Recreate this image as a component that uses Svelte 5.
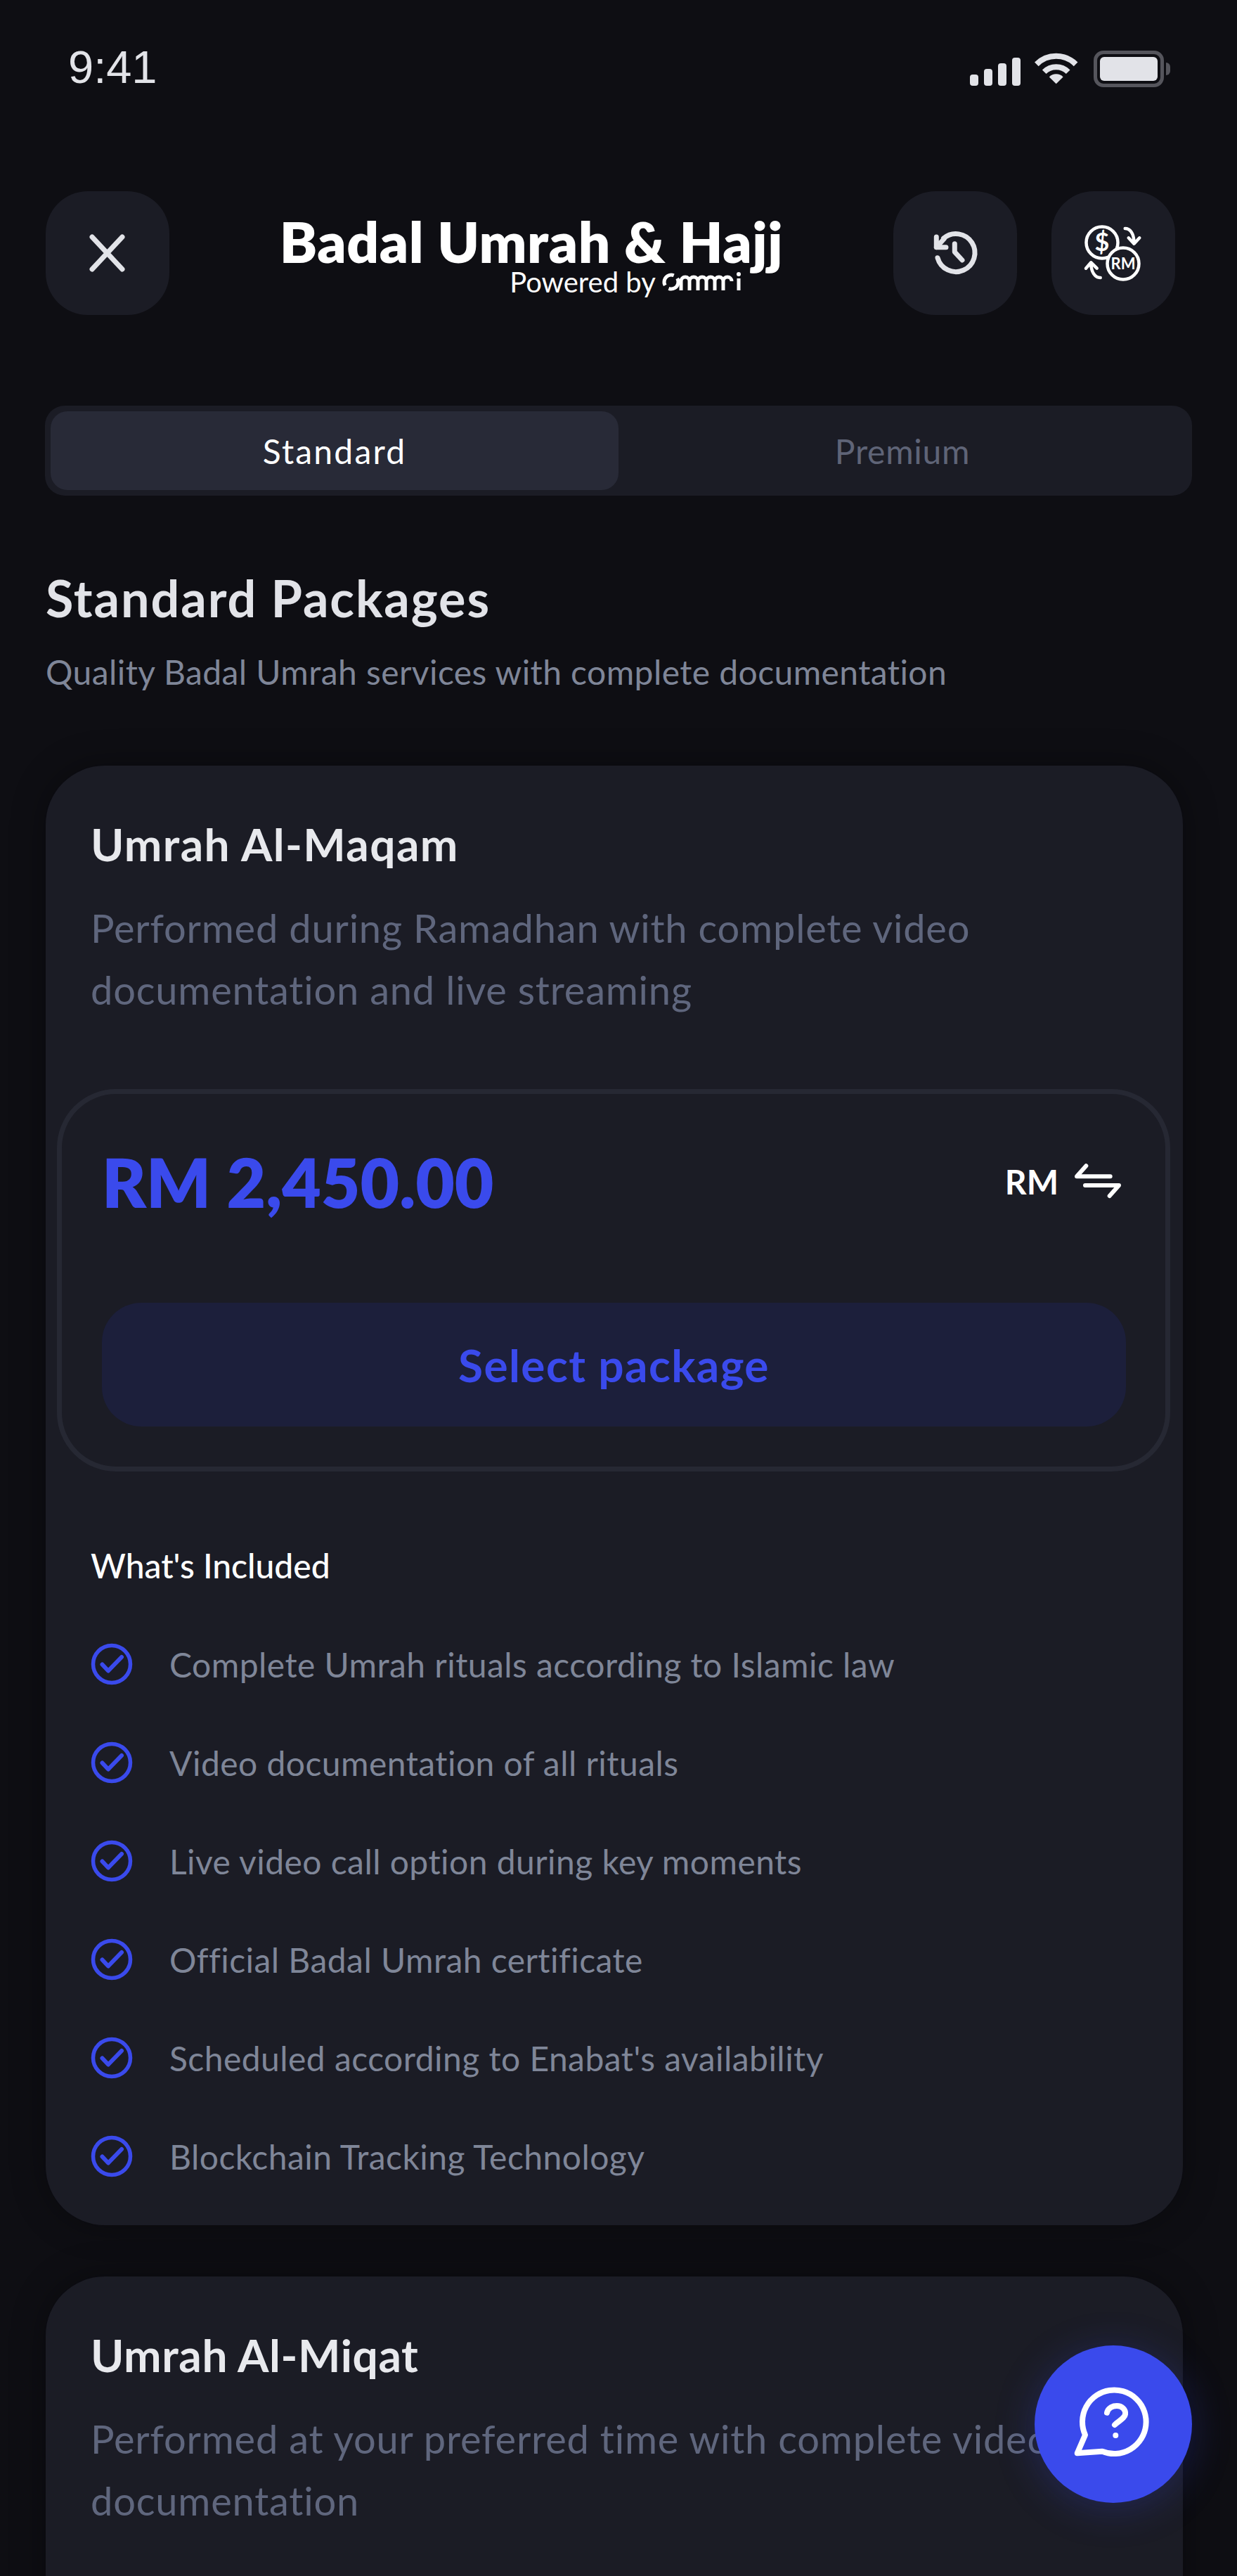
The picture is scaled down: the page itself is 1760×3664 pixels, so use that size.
<script>
  const features = [
    'Complete Umrah rituals according to Islamic law',
    'Video documentation of all rituals',
    'Live video call option during key moments',
    'Official Badal Umrah certificate',
    "Scheduled according to Enabat's availability",
    'Blockchain Tracking Technology'
  ];
</script>

<div class="page">
  <div class="status">
    <span class="time">9:41</span>
    <div class="status-icons">
      <svg class="signal" width="72" height="40" viewBox="0 0 72 40" fill="#e2e3e8">
        <rect x="0" y="24" width="12" height="16" rx="4" />
        <rect x="20" y="16" width="12" height="24" rx="4" />
        <rect x="40" y="8" width="12" height="32" rx="4" />
        <rect x="60" y="0" width="12" height="40" rx="4" />
      </svg>
      <svg class="wifi" width="62" height="46" viewBox="0 0 62 46" fill="none" stroke="#e2e3e8" stroke-width="8">
        <path d="M2.8 16.4A39.5 39.5 0 0 1 58.6 16.4" />
        <path d="M13.7 27.3A24 24 0 0 1 47.7 27.3" />
        <path d="M30.7 44.3L20.8 34.4A14 14 0 0 1 40.6 34.4Z" fill="#e2e3e8" stroke="none" />
      </svg>
      <div class="battery">
        <div class="battery-fill"></div>
        <div class="battery-nub"></div>
      </div>
    </div>
  </div>

  <header class="header">
    <button class="icon-btn" aria-label="Close">
      <svg width="56" height="56" viewBox="0 0 56 56" fill="none" stroke="#e2e3e8" stroke-width="7" stroke-linecap="round">
        <path d="M6 5L49 51M49 5L6 51" />
      </svg>
    </button>
    <div class="title-wrap">
      <h1>Badal Umrah &amp; Hajj</h1>
      <div class="powered">
        <span>Powered by</span>
        <svg width="116" height="30" viewBox="0 0 116 30" fill="none" stroke="#fff" stroke-width="5" aria-label="ommri">
          <circle cx="14" cy="15" r="10" stroke-dasharray="24.4 7" transform="rotate(-30 14 15)" />
          <path d="M28 27V14a6 6 0 0 1 12 0V27M40 14a6 6 0 0 1 12 0V27M52 27V14a6 6 0 0 1 12 0V27M64 14a6 6 0 0 1 12 0V27M76 27V14a6 6 0 0 1 12 0V27M88 14a6 6 0 0 1 12 0M110 10V27" />
          <circle cx="110" cy="4" r="3" fill="#fff" stroke="none" />
        </svg>
      </div>
    </div>
    <div class="header-actions">
      <button class="icon-btn" aria-label="History">
        <svg width="80" height="80" viewBox="0 0 80 80" fill="none" stroke="#e2e3e8" stroke-width="7" stroke-linecap="round" stroke-linejoin="round">
          <path d="M15 46.7A27 27 0 1 0 23.5 19" />
          <path d="M13.3 17V31.7H27M13.3 31.7L24 20" />
          <path d="M39.3 26.7V38.3L50 50" />
        </svg>
      </button>
      <button class="icon-btn" aria-label="Currency">
        <svg width="110" height="100" viewBox="0 0 110 100" fill="none" stroke="#fff" stroke-width="4.5" stroke-linecap="round" stroke-linejoin="round">
          <circle cx="39" cy="35" r="22.5" />
          <text class="coin-d" x="39" y="47" text-anchor="middle">$</text>
          <circle cx="69" cy="65" r="22.5" fill="#1b1c25" />
          <text class="coin-rm" x="69" y="73" text-anchor="middle">RM</text>
          <path d="M71.7 15C79 15 84 22 84.5 34M76.7 28.3L84.5 36.7L92.3 28.3" />
          <path d="M36.7 85C29 85 23.5 77 23.3 65M16 71.7L23.3 63.3L31.7 71.7" />
        </svg>
      </button>
    </div>
  </header>

  <div class="tabs">
    <div class="tab active">Standard</div>
    <div class="tab">Premium</div>
  </div>

  <section class="intro">
    <h2>Standard Packages</h2>
    <p>Quality Badal Umrah services with complete documentation</p>
  </section>

  <article class="card">
    <h3>Umrah Al-Maqam</h3>
    <p class="desc">Performed during Ramadhan with complete video<br />documentation and live streaming</p>

    <div class="price-box">
      <div class="price-row">
        <span class="price">RM 2,450.00</span>
        <span class="currency">
          RM
          <svg width="70" height="52" viewBox="0 0 70 52" fill="none" stroke="#fff" stroke-width="6" stroke-linecap="round" stroke-linejoin="round">
            <path d="M51.7 19.3H4L17.3 4.3M16 32H64L50.7 47" />
          </svg>
        </span>
      </div>
      <button class="select">Select package</button>
    </div>

    <h4>What's Included</h4>
    <ul>
      {#each features as item}
        <li>
          <svg width="60" height="60" viewBox="0 0 60 60" fill="none" stroke="#3a4aec" stroke-width="5.5" stroke-linecap="round" stroke-linejoin="round">
            <circle cx="30" cy="30" r="26.5" />
            <path d="M16.5 30.5L25 39.5L44 20" stroke-width="6" />
          </svg>
          <span>{item}</span>
        </li>
      {/each}
    </ul>
  </article>

  <article class="card second">
    <h3>Umrah Al-Miqat</h3>
    <p class="desc">Performed at your preferred time with complete video<br />documentation</p>
  </article>

  <button class="fab" aria-label="Help">
    <svg width="120" height="120" viewBox="0 0 120 120" fill="none" stroke="#fff" stroke-width="8" stroke-linecap="round" stroke-linejoin="round">
      <path d="M20 75.3A45.3 45.3 0 1 1 44.3 98.7L8.7 101.3Z" />
      <path d="M51 43.7C53 36 60 34 65 34C72 34 78 39 77 46C76 52 68 55 62 61" />
      <circle cx="63.3" cy="76" r="4" fill="#fff" stroke="none" />
    </svg>
  </button>
</div>

<style>
  :global(body) {
    margin: 0;
    background: #0e0e13;
  }

  .page {
    position: relative;
    width: 1760px;
    height: 3664px;
    overflow: hidden;
    background: #0e0e13;
    font-family: Lato, "Noto Sans", sans-serif;
    color: #e2e3e8;
  }

  button {
    border: none;
    padding: 0;
    font-family: inherit;
    cursor: pointer;
  }

  .status {
    height: 272px;
    box-sizing: border-box;
    padding: 60px 96px 0 97px;
    display: flex;
    justify-content: space-between;
    align-items: flex-start;
  }

  .time {
    font-family: "Liberation Sans", sans-serif;
    font-size: 65px;
    line-height: 72px;
    color: #e2e3e8;
  }

  .status-icons {
    display: flex;
    align-items: flex-start;
    padding-top: 12px;
  }

  .signal {
    margin-top: 10px;
    margin-right: 20px;
  }

  .wifi {
    margin-top: 3px;
    margin-right: 22px;
  }

  .battery {
    position: relative;
    width: 100px;
    height: 52px;
    box-sizing: border-box;
    border: 5px solid #55555c;
    border-radius: 14px;
    padding: 4px;
    margin-right: 8px;
  }

  .battery-fill {
    height: 100%;
    background: #e2e3e8;
    border-radius: 6px;
  }

  .battery-nub {
    position: absolute;
    right: -14px;
    top: 12px;
    width: 6px;
    height: 18px;
    background: #55555c;
    border-radius: 0 6px 6px 0;
  }

  .header {
    display: flex;
    align-items: center;
    padding: 0 88px 0 65px;
    height: 176px;
  }

  .icon-btn {
    width: 176px;
    height: 176px;
    flex: none;
    border-radius: 60px;
    background: #1b1c25;
    display: flex;
    align-items: center;
    justify-content: center;
  }

  .title-wrap {
    flex: 1;
    display: flex;
    flex-direction: column;
    align-items: center;
    padding-top: 8px;
  }

  h1 {
    margin: 0;
    font-size: 80px;
    font-weight: 800;
    line-height: 76px;
    letter-spacing: 0.6px;
    color: #fff;
    white-space: nowrap;
  }

  .powered {
    display: flex;
    align-items: center;
    gap: 8px;
    margin-top: -2px;
    margin-left: 270px;
    font-size: 40px;
    line-height: 44px;
    color: #fff;
  }

  .header-actions {
    display: flex;
    gap: 49px;
  }

  .coin-d {
    font-family: Lato, sans-serif;
    font-size: 36px;
    font-weight: 700;
    fill: #fff;
    stroke: none;
  }

  .coin-rm {
    font-family: Lato, sans-serif;
    font-size: 22px;
    font-weight: 700;
    fill: #fff;
    stroke: none;
  }

  .tabs {
    margin: 129px 64px 0;
    height: 128px;
    box-sizing: border-box;
    padding: 8px;
    display: flex;
    background: #1b1c25;
    border-radius: 28px;
  }

  .tab {
    flex: 1;
    display: flex;
    align-items: center;
    justify-content: center;
    border-radius: 24px;
    font-size: 48px;
    letter-spacing: 0.7px;
    color: #5f6477;
  }

  .tab.active {
    background: #282a37;
    letter-spacing: 2.2px;
    color: #fff;
  }

  .intro {
    margin: 101px 65px 0;
  }

  h2 {
    margin: 0;
    font-size: 72px;
    font-weight: 700;
    line-height: 88px;
    letter-spacing: 1.9px;
    color: #e2e3e8;
  }

  .intro p {
    margin: 32px 0 0;
    font-size: 48px;
    line-height: 60px;
    letter-spacing: 0.42px;
    color: #7f8698;
  }

  .card {
    margin: 103px 77px 0 65px;
    padding: 72px 64px 68px;
    background: #1b1c25;
    border-radius: 84px;
    box-shadow: 0 0 48px rgba(0, 0, 0, 0.35);
  }

  .second {
    margin-top: 73px;
    height: 600px;
  }

  h3 {
    margin: 0;
    font-size: 64px;
    font-weight: 700;
    line-height: 80px;
    letter-spacing: 1.4px;
    color: #e8e9ed;
  }

  .second h3 {
    letter-spacing: 0.6px;
  }

  .desc {
    margin: 35px 0 0;
    font-size: 56px;
    line-height: 88px;
    letter-spacing: 0.8px;
    color: #5f667d;
  }

  .price-box {
    margin: 97px -46px 0 -48px;
    height: 544px;
    box-sizing: border-box;
    padding: 59px 56px 0 57px;
    border: 7px solid #262833;
    border-radius: 84px;
  }

  .price-row {
    display: flex;
    justify-content: space-between;
    align-items: center;
    height: 130px;
  }

  .price {
    font-size: 96px;
    font-weight: 800;
    color: #3a4aec;
  }

  .currency {
    display: flex;
    align-items: center;
    gap: 22px;
    padding-right: 4px;
    font-size: 48px;
    font-weight: 700;
    color: #fff;
  }

  .select {
    display: block;
    width: 100%;
    height: 176px;
    margin-top: 108px;
    border-radius: 56px;
    background: #1c1f3b;
    font-size: 64px;
    font-weight: 700;
    letter-spacing: 1.4px;
    color: #3a4aec;
  }

  h4 {
    margin: 104px 0 0;
    font-size: 48px;
    font-weight: 500;
    line-height: 60px;
    color: #fff;
  }

  ul {
    margin: 80px 0 0;
    padding: 0;
    list-style: none;
    display: flex;
    flex-direction: column;
    gap: 80px;
  }

  li {
    display: flex;
    align-items: center;
    gap: 52px;
    height: 60px;
    font-size: 48px;
    letter-spacing: 0.45px;
    color: #7f8698;
  }

  .fab {
    position: absolute;
    left: 1472px;
    top: 3336px;
    width: 224px;
    height: 224px;
    border-radius: 50%;
    background: #3a4aec;
    display: flex;
    align-items: center;
    justify-content: center;
    box-shadow: 0 8px 56px rgba(58, 74, 236, 0.25);
  }
</style>
